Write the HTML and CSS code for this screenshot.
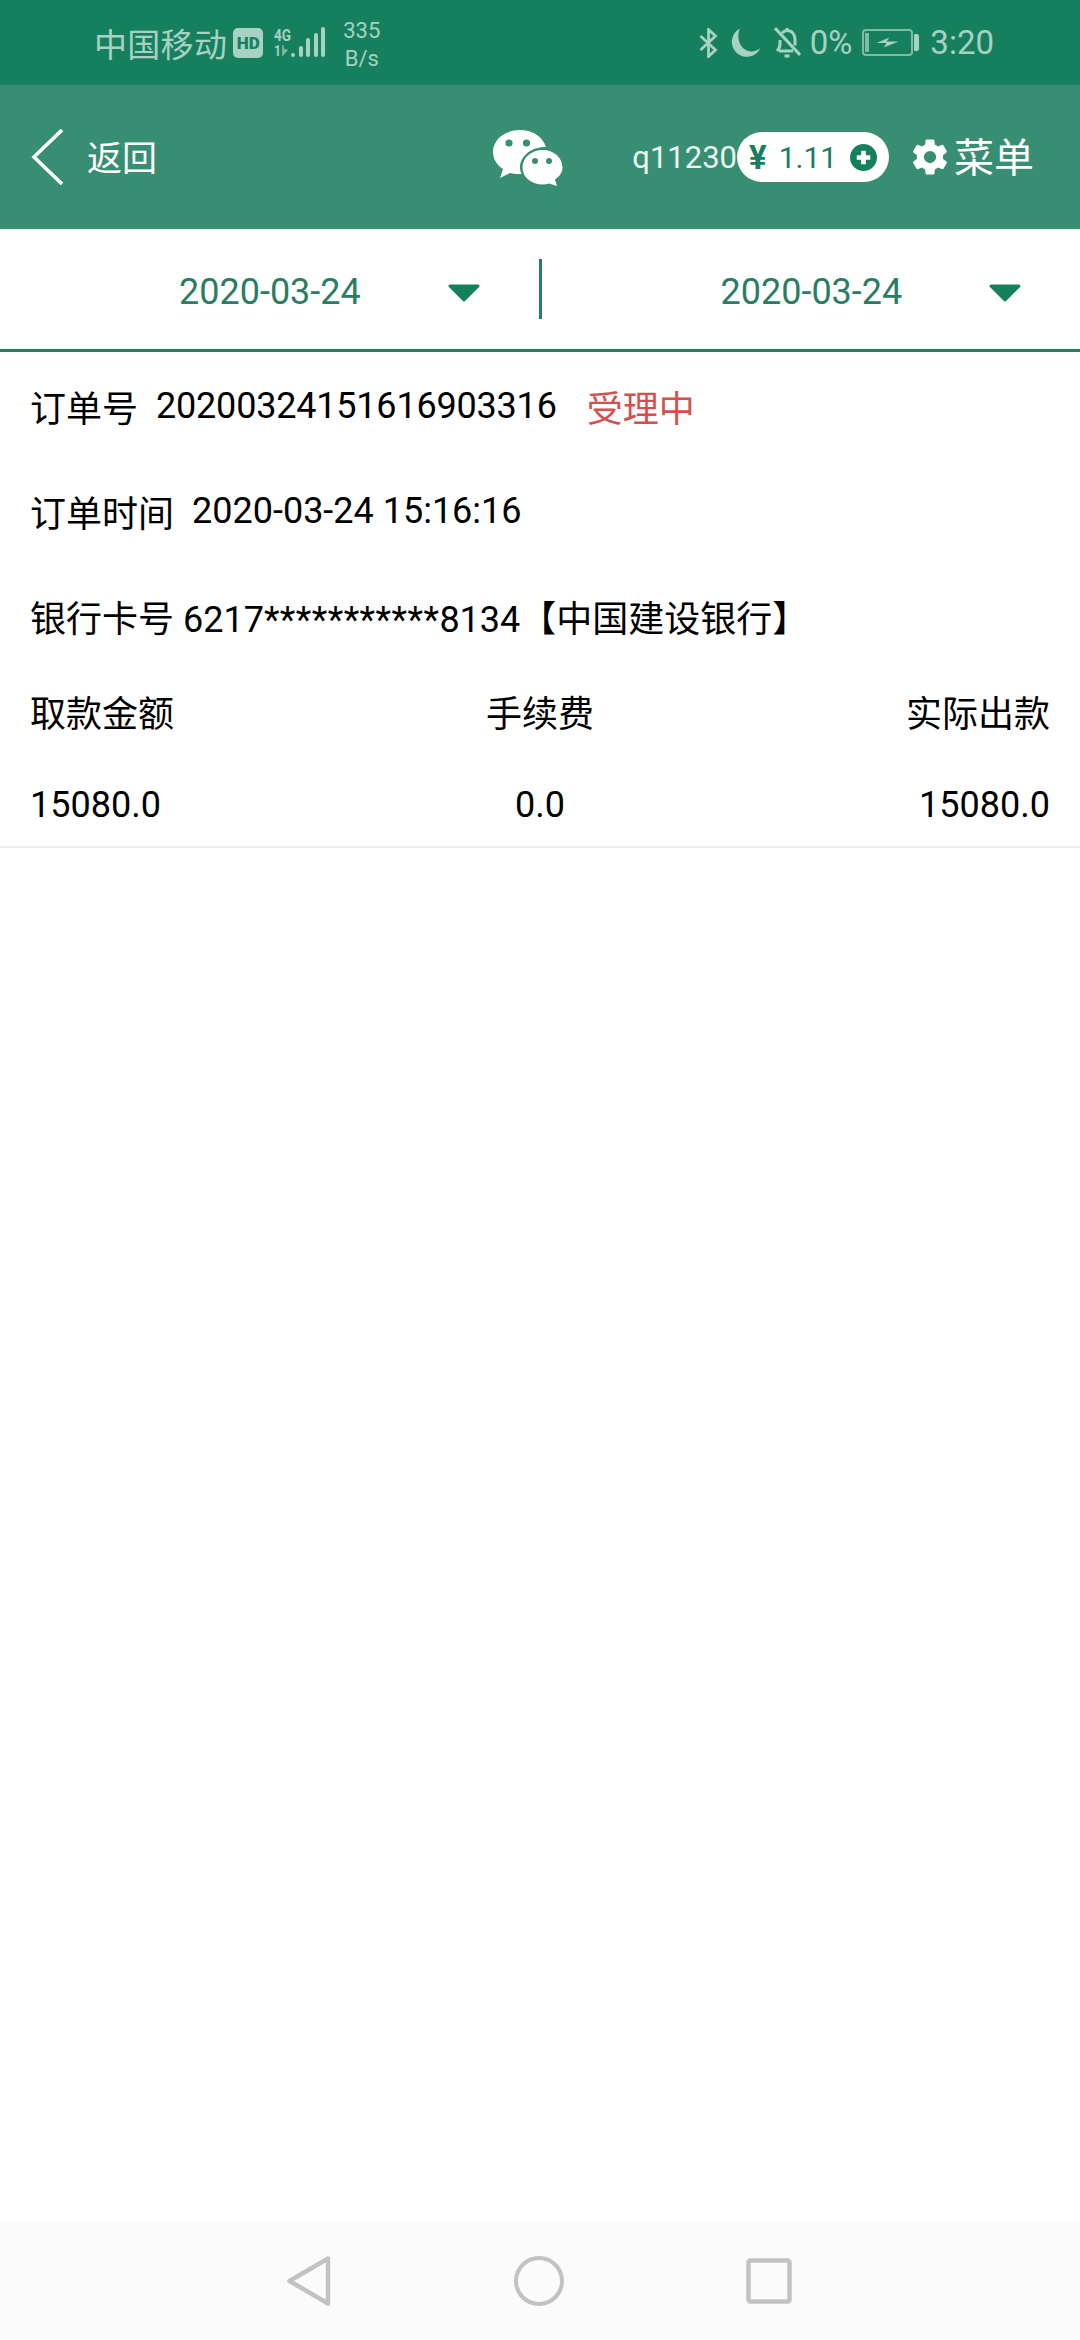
FILE: index.html
```html
<!DOCTYPE html>
<html lang="zh-CN">
<head>
  <meta charset="UTF-8">
  <meta name="viewport" content="width=device-width, initial-scale=1.0">
  <title>订单详情</title>
  <link rel="stylesheet" href="styles.css">
</head>
<body>
  <div class="page">
    <div class="status-bar">
      <div class="status-left">
        <span class="carrier">中国移动</span>
        <span class="hd-badge">HD</span>
        <div class="signal">
          <div class="net-type">
            <span class="net-4g">4G</span>
            <span class="net-1">1<svg class="net-arrows" viewBox="0 0 8 12"><path d="M1 0v11l6-5.500H3.500" fill="#7fbba6" stroke="#7fbba6" stroke-width="1.500"/></svg></span>
          </div>
          <div class="bars">
            <i class="bar bar-1"></i>
            <i class="bar bar-2"></i>
            <i class="bar bar-3"></i>
            <i class="bar bar-4"></i>
            <i class="bar bar-5"></i>
          </div>
        </div>
        <div class="speed">
          <span>335</span>
          <span>B/s</span>
        </div>
      </div>
      <div class="status-right">
        <svg class="st-bt" viewBox="0 0 19 30"><path d="M1.500 8l15 14-7 6.500v-27l7 6.500-15 14" fill="none" stroke="#a7d1c3" stroke-width="2.800"/></svg>
        <svg class="st-moon" viewBox="0 0 32 30"><path d="M11 .5A15 15 0 1 0 31.500 20C27 24 19 25 14 20 9 15 8 7 11 .5z" fill="#a7d1c3"/></svg>
        <svg class="st-bell" viewBox="0 0 27 31"><path d="M3 24c2-2 3-4 3-7v-4M8 6c1.500-1.500 3-2.500 5-2.500 5 0 8 4 8 9v6M5 24h14M10.500 29h5M13 1v3M1 1l25 27" fill="none" stroke="#a7d1c3" stroke-width="3"/></svg>
        <span class="battery-pct">0%</span>
        <div class="battery">
          <div class="battery-body">
            <i class="battery-level"></i>
            <svg class="battery-bolt" viewBox="0 0 24 12"><path d="M0 6.500l14-6-3 4.500h13L8 11.500l3-5z" fill="#a7d1c3"/></svg>
          </div>
          <i class="battery-tip"></i>
        </div>
        <span class="clock">3:20</span>
      </div>
    </div>

    <div class="nav-bar">
      <div class="nav-back">
        <svg class="back-icon" viewBox="0 0 34 56"><path d="M32 1L4 28l28 27" fill="none" stroke="#fff" stroke-width="3.600"/></svg>
        <span class="nav-label">返回</span>
      </div>
      <svg class="wechat-icon" viewBox="0 0 70 56">
        <path d="M27 0C12 0 0 9.500 0 22c0 7 4 13 10 17l-3 9 10-5c3 1 7 1 10 1h1.500c-1-2-1.500-4-1.500-6.500C27 26 38.500 17 52 17h1C50 7 40 0 27 0z" fill="#fff"/>
        <circle cx="16" cy="13" r="3.600" fill="#388e72"/>
        <circle cx="33.500" cy="13" r="3.600" fill="#388e72"/>
        <path d="M50 20c-11.500 0-20.500 7.500-20.500 17.500S38.500 54.500 50 54.500c2 0 4-.5 6-1l8 2.500-2-6.500c4.500-3 7.500-7 7.500-12C69.500 27.500 60.500 20 50 20z" fill="#fff"/>
        <circle cx="42" cy="31" r="3" fill="#388e72"/>
        <circle cx="56" cy="31" r="3" fill="#388e72"/>
      </svg>
      <div class="nav-right">
        <span class="user-id">q11230</span>
        <div class="balance">
          <span class="yen">¥</span>
          <span class="amount">1.11</span>
          <svg class="plus-icon" viewBox="0 0 26 26"><circle cx="13" cy="13" r="13" fill="#16805e"/><path d="M13 6.500v13M6.500 13h13" stroke="#fff" stroke-width="4.500"/></svg>
        </div>
        <div class="menu">
          <svg class="gear-icon" viewBox="0 0 24 24"><path fill="#fff" d="M19.400 13c.04-.33.06-.66.06-1s-.02-.67-.06-1l2.100-1.650c.2-.15.24-.42.120-.64l-2-3.460c-.12-.22-.38-.3-.6-.22l-2.500 1c-.52-.4-1.080-.73-1.700-.98l-.37-2.650A.5.500 0 0 0 14 1.970h-4c-.25 0-.46.18-.5.42l-.37 2.650c-.62.25-1.180.59-1.700.98l-2.500-1c-.22-.09-.48 0-.6.22l-2 3.460c-.13.22-.07.490.12.640L4.560 11c-.04.33-.07.67-.07 1s.03.67.07 1l-2.110 1.650c-.19.15-.25.42-.12.640l2 3.460c.12.22.38.3.6.22l2.500-1c.52.4 1.080.73 1.700.98l.37 2.650c.04.24.25.42.5.42h4c.25 0 .46-.18.5-.42l.37-2.650c.62-.25 1.180-.59 1.700-.98l2.500 1c.22.09.48 0 .6-.22l2-3.460c.12-.22.08-.49-.12-.64L19.400 13zM12 15.500a3.500 3.500 0 1 1 0-7 3.500 3.500 0 0 1 0 7z"/></svg>
          <span class="nav-label">菜单</span>
        </div>
      </div>
    </div>

    <div class="date-bar">
      <div class="date-picker">
        <span class="date-text">2020-03-24</span>
        <svg class="caret" viewBox="0 0 32 18"><path d="M2 2h28L16 16z" fill="#16805e" stroke="#16805e" stroke-width="3" stroke-linejoin="round"/></svg>
      </div>
      <i class="date-divider"></i>
      <div class="date-picker">
        <span class="date-text">2020-03-24</span>
        <svg class="caret" viewBox="0 0 32 18"><path d="M2 2h28L16 16z" fill="#16805e" stroke="#16805e" stroke-width="3" stroke-linejoin="round"/></svg>
      </div>
    </div>

    <div class="order">
      <div class="order-line">
        <span>订单号</span>
        <span class="order-no">20200324151616903316</span>
        <span class="order-state">受理中</span>
      </div>
      <div class="order-line">
        <span>订单时间</span>
        <span>2020-03-24 15:16:16</span>
      </div>
      <div class="order-line">
        <span>银行卡号 6217<span class="card-mask">***********</span>8134【中国建设银行】</span>
      </div>
      <div class="amount-grid">
        <span>取款金额</span>
        <span class="cell-mid">手续费</span>
        <span class="cell-end">实际出款</span>
        <span class="amount-value">15080.0</span>
        <span class="amount-value cell-mid">0.0</span>
        <span class="amount-value cell-end">15080.0</span>
      </div>
    </div>

    <div class="spacer"></div>

    <div class="nav-keys">
      <svg class="key-back" viewBox="0 0 44 50"><path d="M41 2.500L2.500 25 41 47.500z" fill="none" stroke="#c2c2c2" stroke-width="4.500" stroke-linejoin="round"/></svg>
      <svg class="key-home" viewBox="0 0 50 50"><circle cx="25" cy="25" r="23" fill="none" stroke="#c2c2c2" stroke-width="4"/></svg>
      <svg class="key-recent" viewBox="0 0 46 46"><rect x="2.500" y="2.500" width="41" height="41" rx="2" fill="none" stroke="#c2c2c2" stroke-width="4.500"/></svg>
    </div>
  </div>
</body>
</html>
```

FILE: styles.css
```css
* { box-sizing: border-box; }
html, body { margin: 0; padding: 0; }
body { background: #fff; font-family: Roboto, "Noto Sans CJK SC", sans-serif; color: #000; }
svg { display: block; }
i { display: block; }
.page { width: 1080px; height: 2340px; display: flex; flex-direction: column; overflow: hidden; }

/* status bar */
.status-bar { height: 85px; background: #16805e; color: #a7d1c3; display: flex; align-items: center; justify-content: space-between; padding: 0 86px 0 94px; }
.status-left, .status-right { display: flex; align-items: center; }
.carrier { font-size: 33px; letter-spacing: .3px; }
.hd-badge { margin-left: 6px; width: 30px; height: 30px; border-radius: 5px; background: #a7d1c3; color: #16805e; font-size: 17px; font-weight: 900; text-align: center; line-height: 30px; }
.signal { display: flex; align-items: flex-end; margin-left: 11px; height: 32px; }
.net-type { display: flex; flex-direction: column; width: 17px; font-size: 17px; font-weight: 700; line-height: 16px; }
.net-4g, .net-1 { display: flex; align-items: center; transform: scaleX(.8); transform-origin: left center; }
.net-1 { font-size: 15px; }
.net-arrows { width: 8px; height: 11px; margin-left: 1px; }
.bars { display: flex; align-items: flex-end; gap: 3.500px; margin-bottom: 2px; }
.bar { width: 4px; background: #a7d1c3; border-radius: 2px; }
.bar-1 { height: 4px; }
.bar-2 { height: 11px; }
.bar-3 { height: 19px; }
.bar-4 { height: 24px; }
.bar-5 { height: 30px; }
.speed { display: flex; flex-direction: column; align-items: center; margin: 5px 0 0 18px; font-size: 22px; line-height: 28px; }
.st-bt { width: 19px; height: 30px; }
.st-moon { width: 32px; height: 30px; margin-left: 11px; }
.st-bell { width: 27px; height: 31px; margin-left: 13px; }
.battery-pct { font-size: 33px; margin-left: 9px; }
.battery { display: flex; align-items: center; margin-left: 10px; }
.battery-body { width: 51px; height: 27px; border: 2px solid #7fbba6; border-radius: 4px; display: flex; align-items: center; padding-left: 1px; }
.battery-level { width: 4px; height: 19px; background: #7fbba6; }
.battery-bolt { width: 23px; height: 11px; margin-left: 7px; }
.battery-tip { width: 5px; height: 17px; margin-left: 1px; background: #a7d1c3; border-radius: 1px 2px 2px 1px; }
.clock { font-size: 33px; margin-left: 11px; }

/* nav bar */
.nav-bar { height: 144px; background: #388e72; color: #fff; display: flex; align-items: center; padding: 0 46px 0 30px; }
.nav-back { display: flex; align-items: center; font-size: 35px; }
.nav-label { margin-bottom: 4px; }
.back-icon { width: 34px; height: 56px; margin-right: 23px; }
.wechat-icon { width: 70px; height: 56px; margin-left: 336px; margin-top: 2px; }
.nav-right { display: flex; align-items: center; margin-left: auto; }
.user-id { font-size: 31px; color: #e8f5f0; }
.balance { display: flex; align-items: center; width: 152px; height: 50px; border-radius: 25px; background: #fff; color: #16805e; padding: 0 12px; font-size: 30px; }
.yen { font-weight: 700; font-size: 33px; line-height: 1; }
.amount { margin-left: 12px; }
.plus-icon { width: 27px; height: 27px; margin-left: auto; }
.menu { display: flex; align-items: center; margin-left: 20px; font-size: 40px; }
.gear-icon { width: 42px; height: 42px; margin-right: 3px; }

/* date picker row */
.date-bar { height: 123px; border-bottom: 3px solid #2a7d63; display: flex; align-items: center; }
.date-picker { flex: 1; display: flex; align-items: center; height: 60px; }
.date-text { font-size: 36px; color: #2a7d63; margin: 5px 0 0 179px; }
.caret { width: 32px; height: 18px; margin: 8px 0 0 87px; }
.date-divider { width: 3px; height: 60px; background: #2a7d63; }

/* order block */
.order { padding: 1px 30px 0; border-bottom: 2px solid #eee; font-size: 36px; height: 496px; }
.order-line { display: flex; gap: 18px; height: 105px; align-items: center; }
.order-no { letter-spacing: -.2px; }
.order-state { color: #d4504c; margin-left: 12px; }
.card-mask { letter-spacing: .45px; }
.amount-grid { display: grid; grid-template-columns: 1fr 1fr 1fr; grid-template-rows: 86px 93px; align-items: center; }
.amount-value { padding-top: 8px; }
.cell-mid { text-align: center; }
.cell-end { text-align: right; }
.spacer { flex: 1; }

/* android keys */
.nav-keys { height: 118px; background: #fbfbfb; display: flex; align-items: center; padding-left: 287px; }
.key-back { width: 44px; height: 50px; }
.key-home { width: 50px; height: 50px; margin-left: 183px; }
.key-recent { width: 46px; height: 46px; margin-left: 182px; }
```
